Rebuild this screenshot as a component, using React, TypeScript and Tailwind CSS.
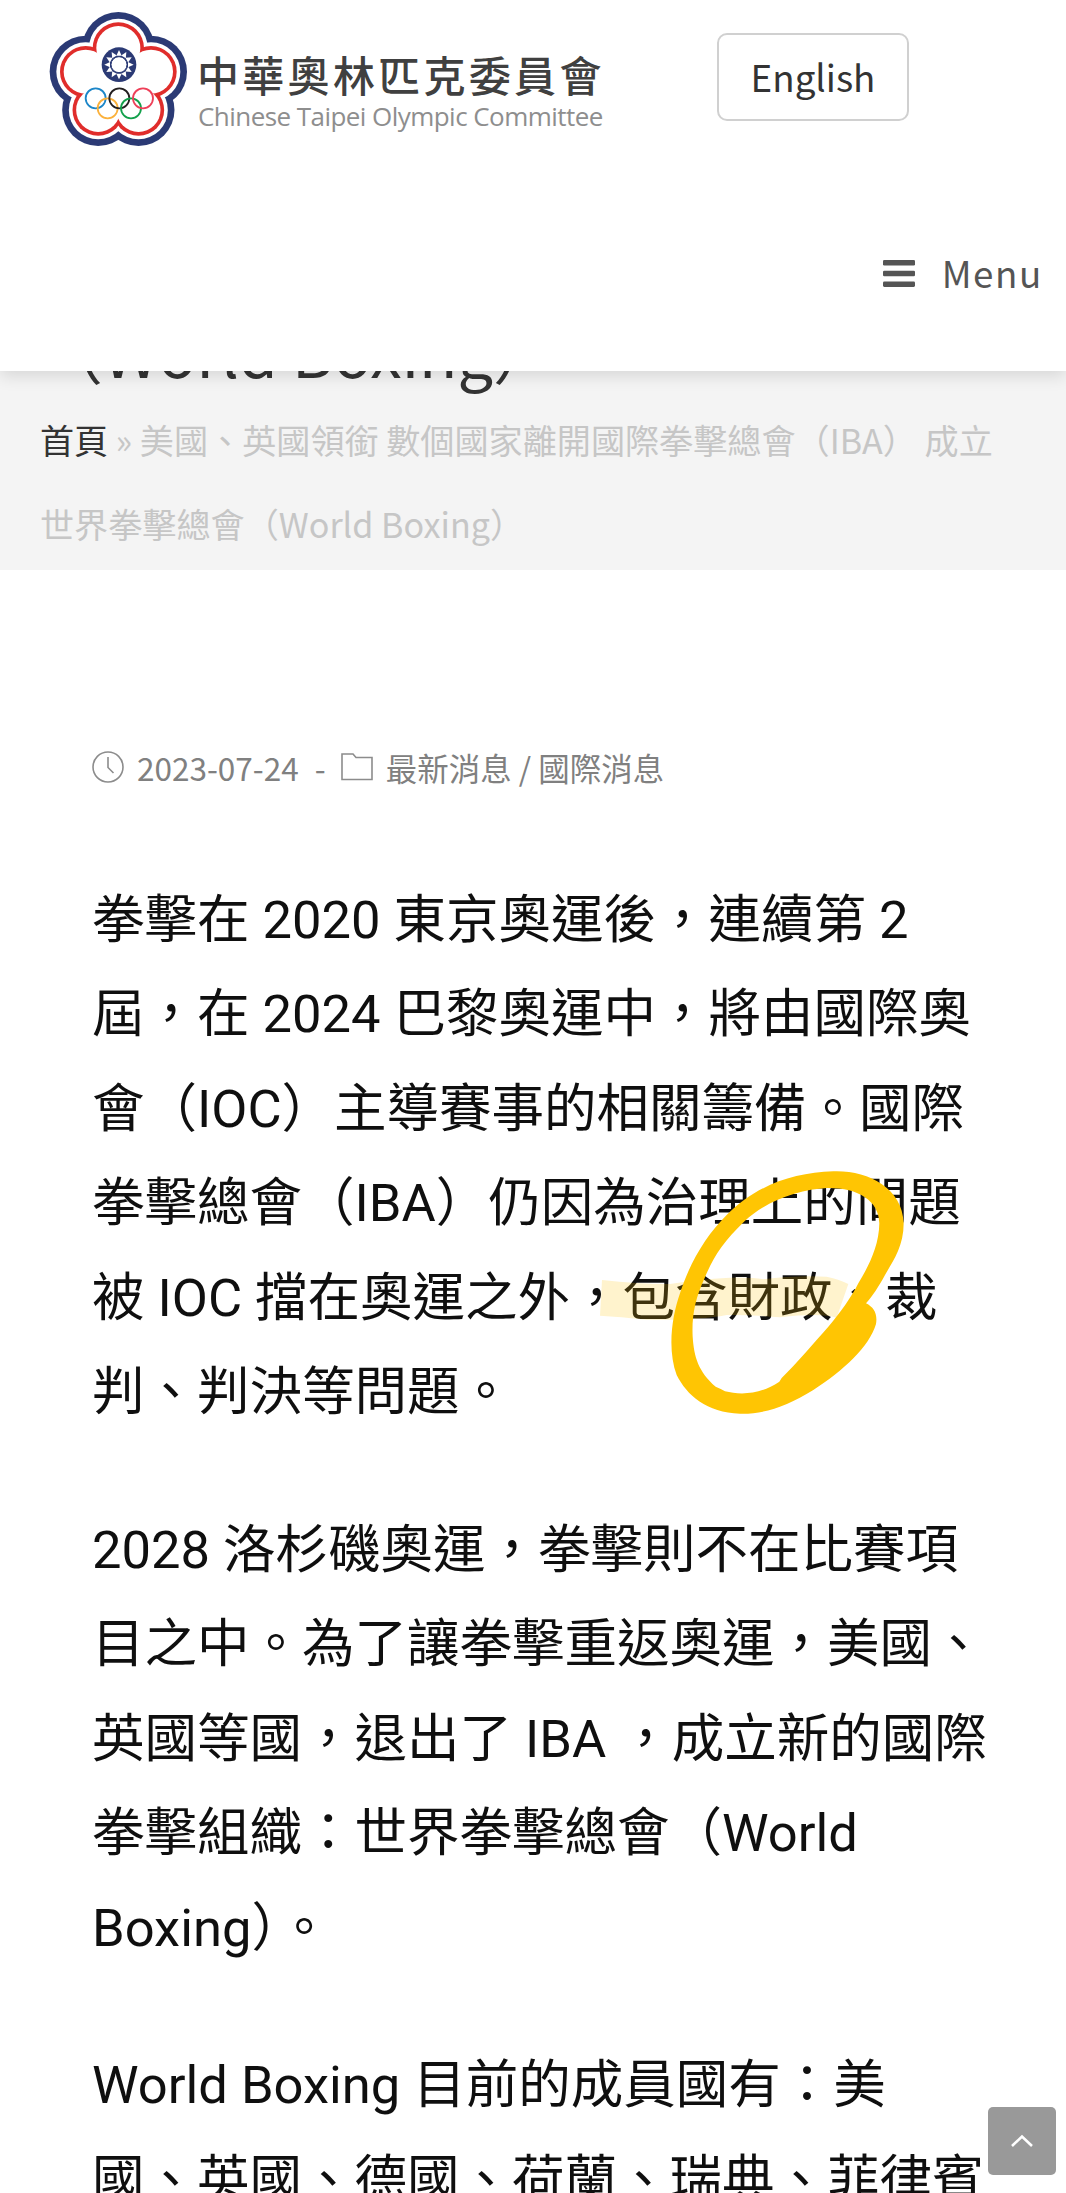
import React from "react";

const paragraphs = [
  [
    "拳擊在 2020 東京奧運後，連續第 2",
    "屆，在 2024 巴黎奧運中，將由國際奧",
    "會（IOC）主導賽事的相關籌備。國際",
    "拳擊總會（IBA）仍因為治理上的問題",
    "被 IOC 擋在奧運之外，包含財政、裁",
    "判、判決等問題。",
  ],
  [
    "2028 洛杉磯奧運，拳擊則不在比賽項",
    "目之中。為了讓拳擊重返奧運，美國、",
    "英國等國，退出了 IBA ，成立新的國際",
    "拳擊組織：世界拳擊總會（World",
    "Boxing）。",
  ],
  ["World Boxing 目前的成員國有：美", "國、英國、德國、荷蘭、瑞典、菲律賓"],
];

const petals = [
  [265, 144],
  [363, 215],
  [325.5, 330],
  [204.5, 330],
  [167, 215],
];

const petalLayers = [
  { r: 108, fill: "#2b3a75" },
  { r: 88, fill: "#ffffff" },
  { r: 77, fill: "#e02d2b" },
  { r: 66, fill: "#ffffff" },
];

const rings = [
  { x: 197, y: 295, color: "#1c86c8" },
  { x: 233, y: 325, color: "#fbb13c" },
  { x: 268, y: 295, color: "#231f20" },
  { x: 303, y: 325, color: "#12a04b" },
  { x: 339, y: 295, color: "#ee3f58" },
];

const Emblem: React.FC = () => (
  <svg viewBox="57 33 414 408" className="w-[138px] h-[136px] shrink-0">
    {petalLayers.map((layer) => (
      <g key={layer.r} fill={layer.fill}>
        {petals.map(([x, y]) => (
          <circle key={`${x}-${y}`} cx={x} cy={y} r={layer.r} />
        ))}
      </g>
    ))}
    <circle cx="265" cy="247" r="100" fill="#fff" />
    <circle cx="267" cy="194" r="52" fill="#2b3a75" />
    {Array.from({ length: 12 }, (_, i) => (
      <path
        key={i}
        d="M259 167 L267 150 L275 167 Z"
        fill="#fff"
        transform={`rotate(${i * 30} 267 194)`}
      />
    ))}
    <circle cx="267" cy="194" r="24" fill="#fff" stroke="#2b3a75" strokeWidth="3" />
    {rings.map((ring) => (
      <circle
        key={ring.color}
        cx={ring.x}
        cy={ring.y}
        r="30"
        fill="none"
        stroke={ring.color}
        strokeWidth="5.5"
      />
    ))}
  </svg>
);

const Header: React.FC = () => (
  <header className="relative z-10 h-[371px] bg-white shadow-[0_5px_16px_rgba(0,0,0,0.12)]">
    <div className="flex items-start pl-[49px] pt-[11px]">
      <Emblem />
      <div className="ml-[10px] mt-[38px] w-[420px] whitespace-nowrap">
        <div className="text-[42px] leading-[50px] font-medium tracking-[3.3px] text-[#404040]">
          中華奧林匹克委員會
        </div>
        <div className="ml-px font-['Open_Sans','Noto_Sans_CJK_TC',sans-serif] text-[26px] leading-[34px] tracking-[-0.55px] text-[#8e8e8e]">
          Chinese Taipei Olympic Committee
        </div>
      </div>
      <a className="ml-[100px] mt-[22px] flex h-[88px] w-[192px] items-center justify-center rounded-[10px] border-2 border-[#d0d0d0] text-[36.75px] text-[#333333]">
        English
      </a>
    </div>
    <div className="mt-[95px] flex items-center justify-end pr-[23px] text-[#555555]">
      <svg viewBox="0 0 32 27" className="mt-[2px] h-[27px] w-[32px]" fill="currentColor">
        <rect width="32" height="5.5" rx="1.3" />
        <rect y="10.7" width="32" height="5.5" rx="1.3" />
        <rect y="21.4" width="32" height="5.5" rx="1.3" />
      </svg>
      <span className="ml-[27px] text-[36.75px] leading-[60px] tracking-[1.6px]">Menu</span>
    </div>
  </header>
);

const PageTitle: React.FC = () => (
  <section className="-mt-16 h-[263px] whitespace-nowrap bg-[#f4f4f4] pl-[40px]">
    <h1 className="h-[90px] text-[63px] leading-[88px] text-[#333333]">（World Boxing）</h1>
    <nav className="text-[34.125px] leading-[84px] text-[#c6c6c6]">
      <div>
        <a className="text-[#333333]">首頁</a> » 美國、英國領銜 數個國家離開國際拳擊總會（IBA） 成立
      </div>
      <div>世界拳擊總會（World Boxing）</div>
    </nav>
  </section>
);

const Meta: React.FC = () => (
  <div className="flex h-[60px] items-center whitespace-nowrap text-[31.5px] leading-[60px] text-[#808080]">
    <svg viewBox="0 0 32 32" className="h-8 w-8" fill="none" stroke="#8c8c8c" strokeWidth="1.6">
      <circle cx="16" cy="16" r="15" />
      <path d="M16 6 V16.5 L21.5 22" />
    </svg>
    <span className="ml-[13px]">2023-07-24</span>
    <span className="ml-[16px]">-</span>
    <svg viewBox="0 0 32 28" className="ml-[15px] h-[28px] w-8" fill="none" stroke="#8c8c8c" strokeWidth="1.6">
      <path d="M1 1 H12 L15 4.5 H31 V26.5 H1 Z" />
    </svg>
    <span className="ml-[13px]">最新消息 / 國際消息</span>
  </div>
);

const Marker: React.FC = () => (
  <svg
    viewBox="0 0 1200 870"
    className="pointer-events-none absolute left-[580px] top-[1150px] h-[290px] w-[400px]"
    fill="#ffc503"
  >
    <path
      opacity="0.2"
      d="M66 390 Q170 402 270 402 Q350 388 450 383 Q520 382 550 388 Q640 376 740 380 Q780 388 805 402 L770 503 Q720 488 600 502 Q520 494 440 495 Q350 512 200 509 Q120 500 60 497 Z"
    />
    <path
      fillRule="evenodd"
      d="M760 64 C860 60 968 112 971 220 C971 290 938 335 915 375 C895 412 878 437 858 460 C882 472 893 492 888 522 C868 590 790 662 700 720 C620 770 550 793 480 791 C380 788 320 735 290 675 C262 600 275 500 300 430 C330 335 380 255 440 195 C530 105 640 68 760 64 Z M740 114 C660 118 560 150 492 215 C430 275 400 320 375 382 C345 445 335 500 338 560 C342 620 355 665 407 710 Q420 715 435 724 C480 735 540 735 598 695 L605 684 C650 640 700 580 745 530 C780 490 815 440 835 400 C865 350 897 290 898 220 C898 150 830 112 740 114 Z"
    />
  </svg>
);

const App: React.FC = () => {
  return (
    <div className="relative h-[2193px] w-[1066px] overflow-hidden bg-white font-['Noto_Sans_CJK_TC',sans-serif]">
      <Header />
      <PageTitle />
      <main className="pl-[92px] pt-[166.5px]">
        <Meta />
        <article className="mt-[76px] flex flex-col gap-[63px] whitespace-nowrap font-['Roboto','Noto_Sans_CJK_TC',sans-serif] text-[52.5px] leading-[94.5px] text-[#0f0f0f]">
          {paragraphs.map((lines, index) => (
            <p key={index}>
              {lines.map((line) => (
                <span key={line} className="block">
                  {line}
                </span>
              ))}
            </p>
          ))}
        </article>
      </main>
      <Marker />
      <button className="absolute left-[988px] top-[2107px] flex h-[68px] w-[68px] items-center justify-center rounded-[5px] bg-[#999999]">
        <svg viewBox="0 0 22 14" className="h-[14px] w-[22px]" fill="none" stroke="#fff" strokeWidth="2.6">
          <path d="M1 12 L11 2.5 L21 12" />
        </svg>
      </button>
    </div>
  );
};

export default App;
